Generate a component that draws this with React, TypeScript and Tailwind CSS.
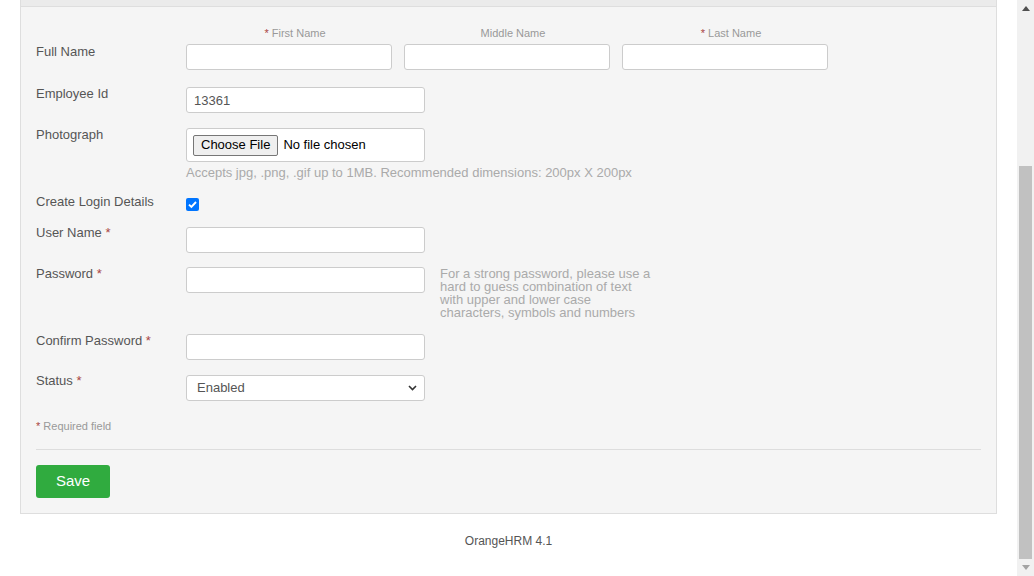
import React from "react";

const Req = () => <span className="text-[#a94442]">*</span>;

function Row({ label, req, labelTop, fieldTop, mt, children }: { label: string; req?: boolean; labelTop: number; fieldTop: number; mt: string; children: React.ReactNode }) {
  return (
    <div className={`flex items-start ${mt}`}>
      <div className="w-[150px] shrink-0 text-[13px] leading-[16px] text-[#555]" style={{ paddingTop: labelTop }}>
        {label}
        {req ? <> <Req /></> : null}
      </div>
      <div style={{ paddingTop: fieldTop }}>{children}</div>
    </div>
  );
}

const inputCls = "block h-[26px] w-[239px] rounded-[3px] border border-[#cccccc] bg-white px-[7px] text-[13px] text-[#555] outline-none";

export default function App() {
  return (
    <div className="flex h-[576px] w-[1034px] overflow-hidden bg-white" style={{ fontFamily: '"Liberation Sans", Arial, sans-serif' }}>
      <div className="flex-1">
        <div className="mx-[20px] border-x border-b border-[#dedede] bg-[#f5f5f5]">
          <div className="h-[7px] border-b border-[#dedede] bg-[#ebebeb]" />
          <div className="px-[15px] pb-[15px]">
            {/* Full name */}
            <div className="mt-[20px] flex items-start">
              <div className="w-[150px] shrink-0 pt-[17px] text-[13px] leading-[16px] text-[#555]">Full Name</div>
              <div className="flex">
                {[
                  { t: "First Name", r: true },
                  { t: "Middle Name", r: false },
                  { t: "Last Name", r: true },
                ].map((c) => (
                  <div key={c.t} className="w-[218px]">
                    <div className="h-[13px] text-center text-[11px] leading-[13px] text-[#999]">
                      {c.r ? <><Req /> </> : null}
                      {c.t}
                    </div>
                    <input className="mt-[4px] block h-[26px] w-[206px] rounded-[3px] border border-[#cccccc] bg-white px-[7px] text-[13px] outline-none" />
                  </div>
                ))}
              </div>
            </div>

            <Row label="Employee Id" labelTop={1} fieldTop={2} mt="mt-[15px]">
              <input className={inputCls} defaultValue="13361" />
            </Row>

            <Row label="Photograph" labelTop={1} fieldTop={2} mt="mt-[13px]">
              <div className="flex h-[34px] w-[239px] items-center rounded-[3px] border border-[#cccccc] bg-white pl-[6px]">
                <span className="flex h-[21px] items-center rounded-[2px] border border-[#767676] bg-[#efefef] px-[7px] text-[13px] text-black">Choose File</span>
                <span className="ml-[5px] text-[13px] text-black">No file chosen</span>
              </div>
              <div className="mt-[3px] text-[13px] leading-[16px] text-[#aaa]">Accepts jpg, .png, .gif up to 1MB. Recommended dimensions: 200px X 200px</div>
            </Row>

            <Row label="Create Login Details" labelTop={1} fieldTop={5} mt="mt-[12px]">
              <div className="flex h-[13px] w-[13px] items-center justify-center rounded-[2px] bg-[#0075ff]">
                <svg width="11" height="11" viewBox="0 0 11 11">
                  <path d="M2 5.6 L4.4 8 L9 3" fill="none" stroke="white" strokeWidth="1.9" />
                </svg>
              </div>
            </Row>

            <Row label="User Name" req labelTop={1} fieldTop={3} mt="mt-[13px]">
              <input className={inputCls} />
            </Row>

            <Row label="Password" req labelTop={1} fieldTop={2} mt="mt-[12px]">
              <div className="flex items-start">
                <input type="password" className={inputCls} />
                <div className="ml-[15px] mt-[0px] w-[218px] text-[13px] leading-[13px] text-[#aaa]">
                  For a strong password, please use a hard to guess combination of text with upper and lower case characters, symbols and numbers
                </div>
              </div>
            </Row>

            <Row label="Confirm Password" req labelTop={1} fieldTop={2} mt="mt-[13px]">
              <input type="password" className={inputCls} />
            </Row>

            <Row label="Status" req labelTop={1} fieldTop={3} mt="mt-[12px]">
              <div className="relative flex h-[26px] w-[239px] items-center rounded-[3px] border border-[#cccccc] bg-white pl-[10px] text-[13px] text-[#555]">
                Enabled
                <svg className="absolute right-[7px] top-[9px]" width="9" height="6" viewBox="0 0 9 6">
                  <path d="M1 1 L4.5 4.5 L8 1" fill="none" stroke="#333" strokeWidth="1.6" />
                </svg>
              </div>
            </Row>

            <div className="mt-[19px] text-[11px] leading-[13px] text-[#999]">
              <Req /> Required field
            </div>
            <div className="mt-[16px] h-px bg-[#dddddd]" />
            <button className="mt-[15px] h-[33px] w-[74px] rounded-[3px] bg-[#30ab3f] text-[15px] text-white">Save</button>
          </div>
        </div>
        <div className="mt-[19px] text-center text-[12px] leading-[16px] text-[#555]">OrangeHRM 4.1</div>
      </div>
      <div className="flex h-[576px] w-[17px] shrink-0 flex-col items-center bg-[#f1f1f1]">
        <div className="flex h-[17px] items-center justify-center">
          <svg width="8" height="5" viewBox="0 0 8 5"><path d="M0 5 L4 0 L8 5 Z" fill="#505050" /></svg>
        </div>
        <div className="mt-[149px] h-[393px] w-[13px] bg-[#c1c1c1]" />
        <div className="flex h-[17px] items-center justify-center">
          <svg width="8" height="5" viewBox="0 0 8 5"><path d="M0 0 L8 0 L4 5 Z" fill="#a3a3a3" /></svg>
        </div>
      </div>
    </div>
  );
}
